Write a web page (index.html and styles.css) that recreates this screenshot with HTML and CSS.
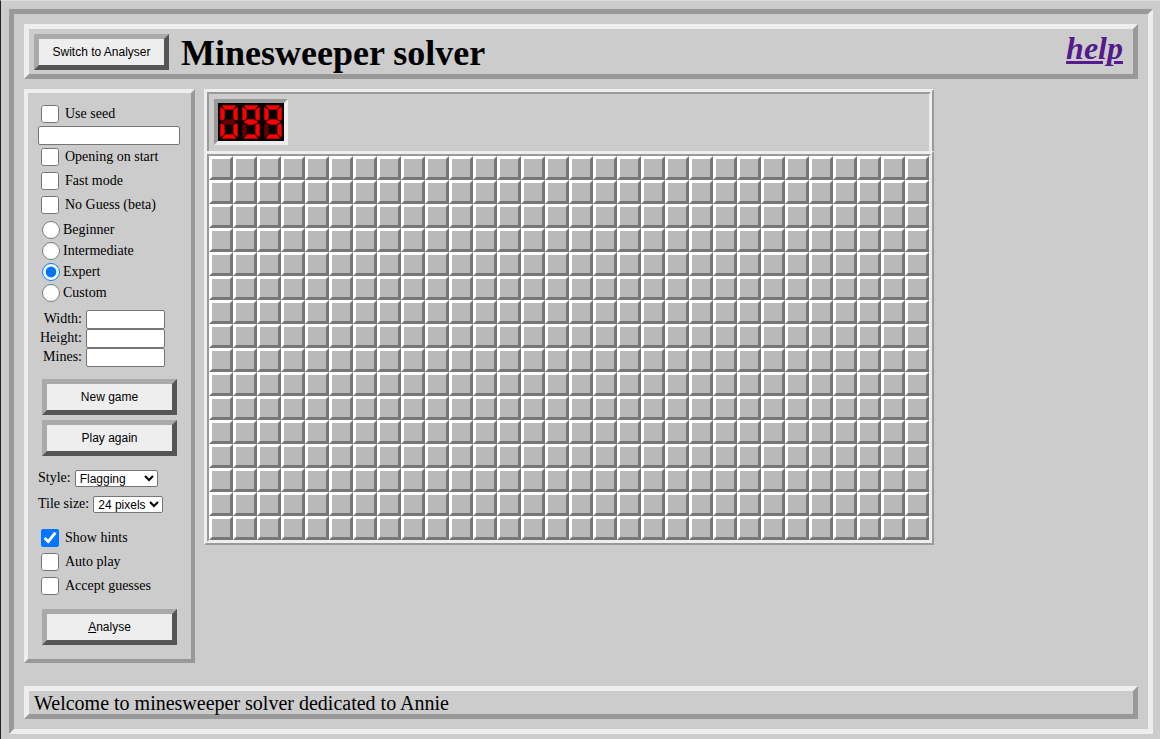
FILE: index.html
```html
<!DOCTYPE html>
<html lang="en">
<head>
<meta charset="utf-8">
<title>Minesweeper solver</title>
<link rel="stylesheet" href="styles.css">
</head>
<body>
<div class="frame">
  <header class="header">
    <button type="button" class="button">Switch to Analyser</button>
    <h1 class="title">Minesweeper solver</h1>
    <a class="help" href="#help">help</a>
  </header>

  <main class="content">
    <form class="sidebar">
      <label class="check"><input type="checkbox">Use seed</label>
      <input class="seed" type="text" aria-label="Seed">
      <div class="checks">
        <label class="check"><input type="checkbox">Opening on start</label>
        <label class="check"><input type="checkbox">Fast mode</label>
        <label class="check"><input type="checkbox">No Guess (beta)</label>
      </div>
      <div class="levels">
        <label class="radio"><input type="radio" name="level">Beginner</label>
        <label class="radio"><input type="radio" name="level">Intermediate</label>
        <label class="radio"><input type="radio" name="level" checked>Expert</label>
        <label class="radio"><input type="radio" name="level">Custom</label>
      </div>
      <div class="sizes">
        <label for="width">Width:</label><input id="width" type="text">
        <label for="height">Height:</label><input id="height" type="text">
        <label for="mines">Mines:</label><input id="mines" type="text">
      </div>
      <div class="actions">
        <button type="button" class="button">New game</button>
        <button type="button" class="button">Play again</button>
      </div>
      <div class="options">
        <div class="option"><label for="style">Style:</label>
          <select id="style" class="select-style"><option>Flagging</option><option>No flagging</option></select></div>
        <div class="option"><label for="tile">Tile size:</label>
          <select id="tile" class="select-tile"><option>24 pixels</option><option>32 pixels</option></select></div>
      </div>
      <div class="checks">
        <label class="check"><input type="checkbox" checked>Show hints</label>
        <label class="check"><input type="checkbox">Auto play</label>
        <label class="check"><input type="checkbox">Accept guesses</label>
      </div>
      <div class="analyse"><button type="button" class="button"><u>A</u>nalyse</button></div>
    </form>

    <section class="game">
      <div class="panel">
        <svg class="counter" width="66" height="38" viewBox="0 0 66 38" role="img" aria-label="Mines left: 099">
          <defs>
            <g id="ring">
              <path d="M3 2H19L15 7H7Z"/>
              <path d="M20 3V17L18 18L15 16V7Z"/>
              <path d="M20 21V35L15 31V22L18 20Z"/>
              <path d="M7 31H15L19 36H3Z"/>
              <path d="M2 3L7 7V16L4 18L2 17Z"/>
            </g>
            <path id="middle" d="M3 19L8 16H14L19 19L14 22H8Z"/>
            <path id="lower-left" d="M2 21L4 20L7 22V31L2 35Z"/>
          </defs>
          <rect class="led-back" width="66" height="38"/>
          <g><use class="on" href="#ring"/><use class="off" href="#middle"/><use class="on" href="#lower-left"/></g>
          <g transform="translate(22)"><use class="on" href="#ring"/><use class="on" href="#middle"/><use class="off" href="#lower-left"/></g>
          <g transform="translate(44)"><use class="on" href="#ring"/><use class="on" href="#middle"/><use class="off" href="#lower-left"/></g>
        </svg>
      </div>
      <div class="board" id="board"></div>
    </section>
  </main>

  <footer class="footer">Welcome to minesweeper solver dedicated to Annie</footer>
</div>
<script src="board.js"></script>
</body>
</html>
```
FILE: styles.css
```css
* { box-sizing: border-box; }
html { background: #ccc; }
body {
  margin: 0;
  min-height: 100vh;
  padding: 8px 7px 5px 8px;
  border-top: 1px solid #ddd;
  border-left: 1px solid #222;
  display: flex;
  font: 14px/18px "Liberation Serif", "Times New Roman", serif;
  color: #000;
}
.frame {
  flex: 1;
  display: flex;
  flex-direction: column;
  padding: 10px;
  border: 5px solid;
  border-color: #999 #eee #eee #999;
}
.header {
  display: flex;
  gap: 12px;
  height: 55px;
  padding: 5px 10px 5px 5px;
  border: 5px solid;
  border-color: #eee #999 #999 #eee;
}
.button {
  width: 135px;
  height: 36px;
  padding: 0;
  border: 5px solid;
  border-color: #aaa #555 #555 #aaa;
  background: #eee;
  color: #000;
  font: 12px/16px "Liberation Sans", Arial, sans-serif;
}
.title { flex: 1; margin: 0; font-size: 36px; line-height: 38px; }
.help {
  color: #551a8b;
  font-size: 32px;
  line-height: 28px;
  font-style: italic;
  font-weight: bold;
}
.content { display: flex; gap: 9px; align-items: flex-start; margin: 10px 0 auto; }
.sidebar {
  width: 171px;
  padding: 12px 10px 14px;
  border: 4px solid;
  border-color: #eee #999 #999 #eee;
}
.check, .radio { display: flex; align-items: center; }
.check { gap: 6px; padding-left: 3px; }
.radio { height: 21px; gap: 3px; padding-left: 4px; }
.check input, .radio input { width: 18px; height: 18px; margin: 0; }
.seed, .sizes input { height: 19px; border: 1px solid #767676; border-radius: 2px; padding: 1px; }
.seed { display: block; width: 142px; margin: 3px 0; }
.checks { display: grid; gap: 6px; }
.levels { margin-top: 5px; }
.sizes {
  display: grid;
  grid-template-columns: 44px 79px;
  column-gap: 4px;
  margin-top: 7px;
  text-align: right;
}
.actions { display: grid; gap: 5px; margin: 12px 4px 13px; }
.option { display: flex; align-items: center; gap: 4px; height: 18px; margin-bottom: 8px; }
.option select {
  height: 17px;
  padding: 0;
  border: 1px solid #767676;
  border-radius: 2px;
  background-color: #fff;
  color: #000;
  font: 12px "Liberation Sans", Arial, sans-serif;
}
.select-style { width: 83px; }
.select-tile { width: 70px; }
.options { margin-bottom: 16px; }
.analyse { margin: 14px 4px 0; }
.panel {
  height: 62px;
  padding: 5px;
  border: 5px ridge #eee;
  border-bottom: 0;
}
.counter {
  display: block;
  box-sizing: content-box;
  border: 4px solid;
  border-color: #999 #eee #eee #999;
}
.led-back { fill: #000; }
.on { fill: #f00; stroke: #000; stroke-width: 0.6; }
.off { fill: #600; stroke: #000; stroke-width: 0.6; }
.board {
  display: grid;
  grid-template-columns: repeat(30, 24px);
  grid-auto-rows: 24px;
  border: 5px ridge #eee;
}
.tile {
  padding: 0;
  border: 3px solid;
  border-color: #fff #777 #777 #fff;
  background: #b9b9b9;
}
.footer {
  height: 33px;
  padding: 0 5px;
  border: 5px solid;
  border-color: #eee #999 #999 #eee;
  font-size: 20px;
  line-height: 24px;
}
```
FILE: board.js
```javascript
const board = document.getElementById("board");
for (let row = 1; row <= 16; row++) {
  for (let column = 1; column <= 30; column++) {
    const tile = document.createElement("button");
    tile.type = "button";
    tile.className = "tile";
    tile.setAttribute("aria-label", `Row ${row}, column ${column}`);
    board.append(tile);
  }
}
```
